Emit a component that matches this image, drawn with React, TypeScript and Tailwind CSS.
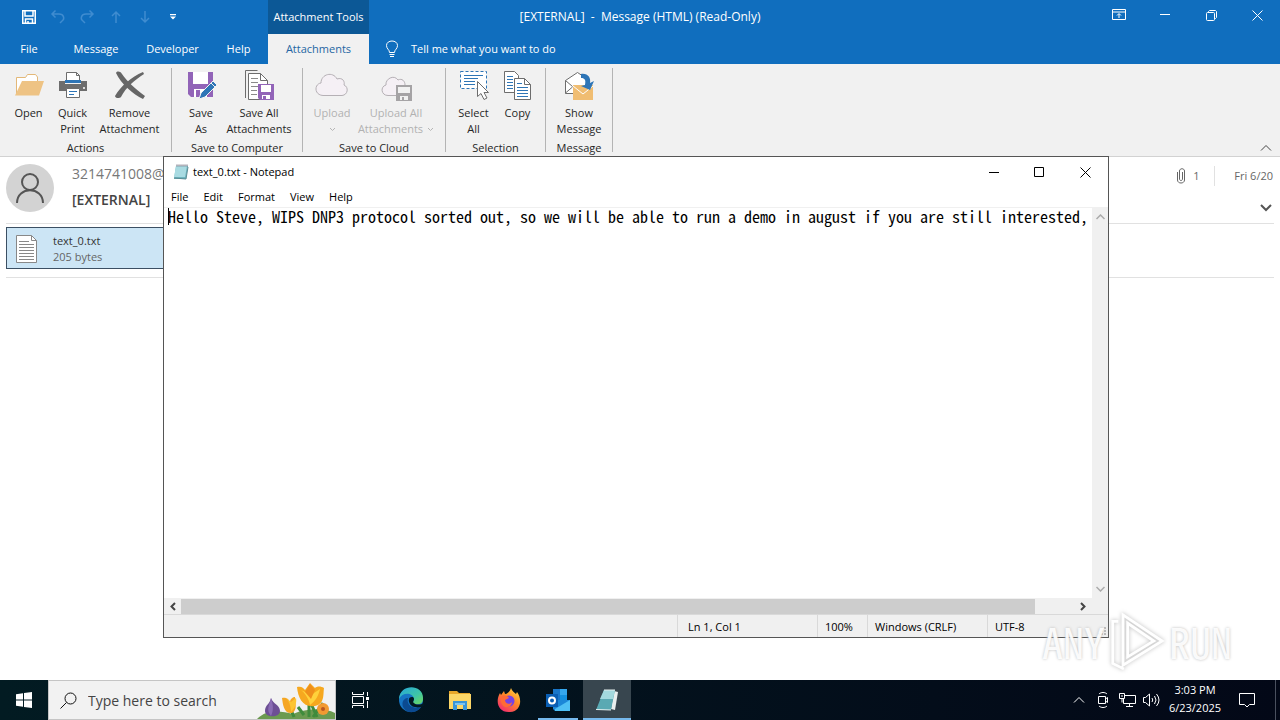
import type { ReactNode } from "react";
import clsx from "clsx";

const MESSAGE =
  "Hello Steve, WIPS DNP3 protocol sorted out, so we will be able to run a demo in august if you are still interested,";

/* ---------- ribbon icons ---------- */

function FolderIcon() {
  return (
    <svg width="32" height="32" viewBox="0 0 32 32" fill="none">
      <path d="M3.500 25V8.500h9l2-3h8l2 2.500v5" fill="#fff" stroke="#e3b878" />
      <path d="M2 26.500 9 12h22l-5 14.500z" fill="#eec384" />
    </svg>
  );
}

function PrinterIcon() {
  return (
    <svg width="32" height="32" viewBox="0 0 32 32" fill="none">
      <path d="M9.500 12V3.500h10l3 3V12" fill="#fff" stroke="#6d6d6d" />
      <path d="M19.500 3.500v3h3" stroke="#6d6d6d" />
      <path d="M2 12h6v3h16v-3h6v10H2z" fill="#6d6d6d" />
      <path d="M8 11h16v3H8z" fill="#2e75b6" />
      <circle cx="27" cy="19" r="1" fill="#fff" />
      <path d="M9.500 19.500h13v9h-13z" fill="#fff" stroke="#6d6d6d" />
      <path d="M12 22.500h8M12 25.500h5" stroke="#2e75b6" />
    </svg>
  );
}

function RemoveIcon() {
  return (
    <svg width="32" height="32" viewBox="0 0 32 32" fill="#666">
      <path d="M2 4c1-2 4-2 6 1 5 7 13 15 23 22l-2 3C19 25 7 15 2 4z" />
      <path d="M30 5C21 11 12 18 7 28c-2 2-6 1-6-1C7 17 17 8 29 3z" />
    </svg>
  );
}

function SaveAsIcon() {
  return (
    <svg width="32" height="32" viewBox="0 0 32 32">
      <path d="M3 3h25v25H6l-3-3z" fill="#9264b8" />
      <path d="M8 3h15v12H8z" fill="#fff" />
      <path d="M9 20h13v8H9z" fill="#fff" />
      <path d="M11 21h4v7h-4z" fill="#9264b8" />
      <path d="m14 30 2-6 12-12 4 4-12 12z" fill="#2e75b6" stroke="#f1f1f1" />
      <path d="m26 14 4 4" stroke="#f1f1f1" />
    </svg>
  );
}

function SaveAllIcon() {
  return (
    <svg width="32" height="32" viewBox="0 0 32 32" fill="none">
      <path d="M2.500 29V1.500h12" stroke="#6d6d6d" />
      <path d="M5.500 4.500h12l7 7v19h-19z" fill="#fff" stroke="#6d6d6d" />
      <path d="M17.500 4.500v7h7" stroke="#6d6d6d" />
      <path d="M8 9.500h7M8 13.500h7M8 17.500h7M8 21.500h6M8 25.500h6" stroke="#8a8a8a" />
      <path d="M15 15h16v16H17l-2-2z" fill="#9264b8" />
      <path d="M18 16h10v7H18zM19 26h8v4h-8z" fill="#fff" />
      <path d="M20 27h3v4h-3z" fill="#9264b8" />
    </svg>
  );
}

function CloudIcon() {
  return (
    <svg width="34" height="32" viewBox="0 0 34 32" fill="none">
      <path
        d="M8 26.500C-1 26-1 15 6 14c0-9 12-12 16-4 6-2 8 3 7 6 5 2 4 10-2 10.500z"
        fill="#f5f0f5"
        stroke="#b5b0b5"
      />
    </svg>
  );
}

function CloudSaveIcon() {
  return (
    <svg width="34" height="32" viewBox="0 0 34 32" fill="none">
      <path
        d="M17 26.500H9c-7 0-8-9-2-10.500C6 10 15 5 19 11c4-2 7 1 7 5"
        fill="#f5f0f5"
        stroke="#b5b0b5"
      />
      <path d="M17 16h16v16H17z" fill="#a5a3a5" />
      <path d="M19 18h12v6H19zM21 27h8v4h-8z" fill="#f1f1f1" />
      <path d="M23 28h2v4h-2z" fill="#a5a3a5" />
    </svg>
  );
}

function SelectAllIcon() {
  return (
    <svg width="32" height="32" viewBox="0 0 32 32" fill="none">
      <path d="M2.500 2.500h26v17h-26z" fill="#fff" stroke="#2e75b6" strokeDasharray="3 2" />
      <path d="M6 6.500h19M6 9.500h14M6 12.500h11M6 15.500h11" stroke="#2e75b6" />
      <path
        d="M19.500 12.500v15l3.500-3 3 6 3-1.500-3-5.500h4.500z"
        fill="#fff"
        stroke="#6d6d6d"
      />
    </svg>
  );
}

function CopyIcon() {
  return (
    <svg width="32" height="32" viewBox="0 0 32 32" fill="none">
      <path d="M2.500 2.500h10l4 4v17h-14z" fill="#fff" stroke="#6d6d6d" />
      <path d="M5 7.500h6M5 10.500h6M5 13.500h6M5 16.500h6M5 19.500h6" stroke="#2e75b6" />
      <path d="M12.500 9.500h10l6 6v15h-16z" fill="#fff" stroke="#6d6d6d" />
      <path d="M22.500 9.500v6h6" stroke="#6d6d6d" />
      <path d="M15 14.500h5M15 18.500h11M15 21.500h11M15 24.500h11M15 27.500h11" stroke="#2e75b6" />
    </svg>
  );
}

function ShowMessageIcon() {
  return (
    <svg width="32" height="32" viewBox="0 0 32 32" fill="none">
      <path d="M2.500 24.500v-13l12-8 12 8v13z" fill="#fff" stroke="#6d6d6d" />
      <path d="m2.500 24 7-6M2.500 11.500l7 6" stroke="#6d6d6d" />
      <path d="M10 16h20v15H10z" fill="#f0bd72" />
      <path d="m10 17 10 8 10-8" stroke="#fff" />
      <path d="M18 5c7-1 10 4 9 9l4-2-4 9-9-4 4-1c1-5 0-7-4-7z" fill="#2e75b6" />
    </svg>
  );
}

/* ---------- outlook ---------- */

type RibbonItem = {
  icon: ReactNode;
  lines: string[];
  width: string;
  disabled?: boolean;
  menu?: boolean;
};

const groups: { name: string; width: string; items: RibbonItem[] }[] = [
  {
    name: "Actions",
    width: "w-[172px]",
    items: [
      { icon: <FolderIcon />, lines: ["Open"], width: "w-11" },
      { icon: <PrinterIcon />, lines: ["Quick", "Print"], width: "w-11" },
      { icon: <RemoveIcon />, lines: ["Remove", "Attachment"], width: "w-[70px]" },
    ],
  },
  {
    name: "Save to Computer",
    width: "w-[131px]",
    items: [
      { icon: <SaveAsIcon />, lines: ["Save", "As"], width: "w-11" },
      { icon: <SaveAllIcon />, lines: ["Save All", "Attachments"], width: "w-[72px]" },
    ],
  },
  {
    name: "Save to Cloud",
    width: "w-[143px]",
    items: [
      { icon: <CloudIcon />, lines: ["Upload", ""], width: "w-11", disabled: true, menu: true },
      {
        icon: <CloudSaveIcon />,
        lines: ["Upload All", "Attachments"],
        width: "w-[84px]",
        disabled: true,
        menu: true,
      },
    ],
  },
  {
    name: "Selection",
    width: "w-[100px]",
    items: [
      { icon: <SelectAllIcon />, lines: ["Select", "All"], width: "w-11" },
      { icon: <CopyIcon />, lines: ["Copy"], width: "w-11" },
    ],
  },
  {
    name: "Message",
    width: "w-[67px]",
    items: [{ icon: <ShowMessageIcon />, lines: ["Show", "Message"], width: "w-[60px]" }],
  },
];

function MenuCaret() {
  return (
    <svg width="7" height="5" viewBox="0 0 7 5" fill="none" stroke="#b5b5b5">
      <path d="m1 1 2.500 2.500L6 1" />
    </svg>
  );
}

function RibbonButton({ item }: { item: RibbonItem }) {
  return (
    <button
      disabled={item.disabled}
      className={clsx(
        "flex flex-col items-center leading-4",
        item.width,
        item.disabled ? "text-[#b1b1b1]" : "text-[#262626]",
      )}
    >
      <span className="flex h-9 items-start">{item.icon}</span>
      {item.lines.map((line, i) => (
        <span key={i} className="flex h-4 items-center gap-1 whitespace-nowrap">
          {line}
          {item.menu && i === item.lines.length - 1 && <MenuCaret />}
        </span>
      ))}
    </button>
  );
}

function TitleBar() {
  return (
    <div className="grid h-[34px] grid-cols-[1fr_auto_1fr] text-white">
      <div className="flex">
        <div className="flex w-[268px] items-center gap-[13px] pl-[21px]">
          <button aria-label="Save">
            <svg width="16" height="16" viewBox="0 0 16 16" fill="none" stroke="#fff" strokeWidth="1.500">
              <path d="M1.750 1.750h12.500v12.500h-12.500zM4 2v5h8V2M4.500 14v-4h7v4M7 12v2" />
            </svg>
          </button>
          <button aria-label="Undo" className="text-[#3f8cd0]">
            <svg width="16" height="16" viewBox="0 0 16 16" fill="none" stroke="currentColor" strokeWidth="1.500">
              <path d="M5.500 1.500 2 5l3.500 3.500M2 5h7c5 0 6 5 3 7l-2 2" />
            </svg>
          </button>
          <button aria-label="Redo" className="text-[#3f8cd0]">
            <svg width="16" height="16" viewBox="0 0 16 16" fill="none" stroke="currentColor" strokeWidth="1.500">
              <path d="M10.500 1.500 14 5l-3.500 3.500M14 5H7C2 5 1 10 4 12l2 2" />
            </svg>
          </button>
          <button aria-label="Previous item" className="text-[#3f8cd0]">
            <svg width="16" height="16" viewBox="0 0 16 16" fill="none" stroke="currentColor" strokeWidth="1.500">
              <path d="M8 14V3M4 7l4-4 4 4" />
            </svg>
          </button>
          <button aria-label="Next item" className="text-[#3f8cd0]">
            <svg width="16" height="16" viewBox="0 0 16 16" fill="none" stroke="currentColor" strokeWidth="1.500">
              <path d="M8 2v11M4 9l4 4 4-4" />
            </svg>
          </button>
          <button aria-label="Customize toolbar">
            <svg width="14" height="16" viewBox="0 0 14 16" fill="#fff">
              <path d="M4 5h6v1.200H4zM4 7.500h6L7 10.500z" />
            </svg>
          </button>
        </div>
        <div className="flex w-[101px] items-center justify-center bg-[#0c5896] whitespace-nowrap">
          Attachment Tools
        </div>
      </div>
      <h1 className="self-center text-xs whitespace-pre">{"[EXTERNAL]  -  Message (HTML) (Read-Only)"}</h1>
      <div className="flex items-center justify-end pb-1">
        <button aria-label="Ribbon display options" className="flex w-[46px] justify-center">
          <svg width="14" height="12" viewBox="0 0 14 12" fill="none" stroke="#fff">
            <path d="M.5.500h13v10H.500zM.500 3h13M7 9V5M5 6.500 7 4.500l2 2" />
          </svg>
        </button>
        <button aria-label="Minimize" className="flex w-[46px] justify-center">
          <svg width="10" height="10" viewBox="0 0 10 10" stroke="#fff">
            <path d="M0 4.500h10" />
          </svg>
        </button>
        <button aria-label="Restore" className="flex w-[46px] justify-center">
          <svg width="11" height="11" viewBox="0 0 11 11" fill="none" stroke="#fff">
            <rect x=".5" y="2.500" width="8" height="8" rx="1" />
            <path d="M2.500 2.500V1.500l1-1h6l1 1v6l-1 1h-1" />
          </svg>
        </button>
        <button aria-label="Close" className="flex w-[46px] justify-center">
          <svg width="11" height="11" viewBox="0 0 11 11" stroke="#fff">
            <path d="m.5.500 10 10M10.500.500l-10 10" />
          </svg>
        </button>
      </div>
    </div>
  );
}

function Ribbon() {
  return (
    <>
      <nav className="flex h-[30px] leading-[30px] text-white">
        <div className="flex w-[268px]">
          <button className="w-[58px]">File</button>
          <button className="w-[76px]">Message</button>
          <button className="w-[77px]">Developer</button>
          <button className="w-[55px]">Help</button>
        </div>
        <button className="w-[101px] bg-[#f1f1f1] text-[#2566a3]">Attachments</button>
        <button className="ml-4 flex items-center gap-3">
          <svg width="14" height="18" viewBox="0 0 14 18" fill="none" stroke="#fff">
            <path d="M4.500 12.500c0-3-3-3.500-3-7 0-6 11-6 11 0 0 3.500-3 4-3 7zM4.500 14.500h5M5 16.500h4" />
          </svg>
          Tell me what you want to do
        </button>
      </nav>
      <div className="flex h-[93px] border-b border-[#d2d2d2] bg-[#f1f1f1] py-1">
        {groups.map((group) => (
          <section
            key={group.name}
            className={clsx("flex flex-col items-center border-r border-[#b4b4b4] pt-px", group.width)}
          >
            <div className="flex h-[71px] shrink-0 justify-center">
              {group.items.map((item) => (
                <RibbonButton key={item.lines[0]} item={item} />
              ))}
            </div>
            <h2 className="leading-4 text-[#262626]">{group.name}</h2>
          </section>
        ))}
        <button aria-label="Collapse the ribbon" className="mr-2 ml-auto self-end">
          <svg width="12" height="8" viewBox="0 0 12 8" fill="none" stroke="#444">
            <path d="m1 6.500 5-5 5 5" />
          </svg>
        </button>
      </div>
    </>
  );
}

function ReadingPane() {
  return (
    <main className="flex-1 px-1.5 pt-[7px] text-[#666]">
      <header className="flex h-[60px] border-b border-[#e1e1e1]">
        <svg width="48" height="48" viewBox="0 0 48 48" fill="none" stroke="#555" strokeWidth="2">
          <circle cx="24" cy="24" r="24" fill="#d3d3d3" stroke="none" />
          <circle cx="24" cy="18" r="8" />
          <path d="M11 39c0-17 26-17 26 0" />
        </svg>
        <div className="ml-[18px] text-sm leading-5">
          <p className="text-[#777]">3214741008@</p>
          <p className="pt-1.5 font-semibold text-[#444]">[EXTERNAL]</p>
        </div>
        <div className="ml-auto flex flex-col items-end">
          <div className="flex h-6 items-center">
            <svg width="10" height="16" viewBox="0 0 10 16" fill="none" stroke="#666">
              <path d="M6.500 4v7c0 2-3 2-3 0V3c0-3 5-3 5 0v9c0 4-7 4-7 0V4" />
            </svg>
            <span className="w-7 pl-[7px]">1</span>
            <span className="h-5 w-5 border-l border-[#e1e1e1]" />
            <span className="pr-px">Fri 6/20</span>
          </div>
          <button aria-label="Expand header" className="mt-4 mr-0.5">
            <svg width="12" height="8" viewBox="0 0 12 8" fill="none" stroke="#555" strokeWidth="2">
              <path d="m1 1 5 5 5-5" />
            </svg>
          </button>
        </div>
      </header>
      <div className="border-b border-[#e1e1e1] pt-[3px] pb-2">
        <button className="flex h-[42px] w-[200px] items-center gap-[15px] border border-[#3b4f63] bg-[#cce5f5] pt-px pl-[9px] text-left leading-4">
          <svg width="22" height="28" viewBox="0 0 22 28" fill="none" stroke="#888">
            <path d="M.5.500h15l5 5v22H.500z" fill="#fff" />
            <path d="M15.500.500v5h5M3 6.500h10M3 9.500h15M3 12.500h15M3 15.500h15M3 18.500h15M3 21.500h15M3 24.500h15" />
          </svg>
          <span>
            <span className="block text-[#333]">text_0.txt</span>
            <span className="block">205 bytes</span>
          </span>
        </button>
      </div>
    </main>
  );
}

/* ---------- notepad ---------- */

function NotepadGlyph() {
  return (
    <svg width="16" height="16" viewBox="0 0 16 16">
      <path d="M3 2h12l-2 13H1z" fill="#6fb5c0" />
      <path d="M3 2h11l-2 11H1z" fill="#a9dbe2" />
      <path d="m1 14 12 1 2-12" fill="none" stroke="#5b8b93" />
      <path d="M4 .500v2M6 .500v2M8 .500v2M10 .500v2M12 .500v2M14 .500v2" stroke="#667" />
    </svg>
  );
}

function Notepad() {
  return (
    <section className="absolute top-[156px] left-[163px] flex h-[482px] w-[946px] flex-col border border-[#555] bg-white text-black">
      <div className="flex h-[30px] shrink-0 items-center pl-[9px]">
        <NotepadGlyph />
        <h2 className="ml-1">text_0.txt - Notepad</h2>
        <div className="ml-auto flex">
          <button aria-label="Minimize Notepad" className="flex h-7 w-[45px] items-center justify-center">
            <svg width="10" height="11" viewBox="0 0 10 11" stroke="#000">
              <path d="M0 5.500h10" />
            </svg>
          </button>
          <button aria-label="Maximize Notepad" className="flex h-7 w-[46px] items-center justify-center">
            <svg width="10" height="10" viewBox="0 0 10 10" fill="none" stroke="#000">
              <path d="M.5.500h9v9H.500z" />
            </svg>
          </button>
          <button aria-label="Close Notepad" className="flex h-7 w-[46px] items-center justify-center">
            <svg width="11" height="11" viewBox="0 0 11 11" stroke="#000">
              <path d="m.5.500 10 10M10.500.500l-10 10" />
            </svg>
          </button>
        </div>
      </div>
      <nav className="flex h-5 shrink-0 items-center gap-[15px] pl-[7px]">
        <button>File</button>
        <button>Edit</button>
        <button>Format</button>
        <button>View</button>
        <button>Help</button>
      </nav>
      <div className="flex min-h-0 flex-1 border-t border-[#f0f0f0]">
        <div className="relative flex-1">
          <textarea
            aria-label="Document text"
            wrap="off"
            defaultValue={MESSAGE}
            className="block size-full resize-none overflow-hidden pl-1 font-['Noto_Sans_Mono_CJK_SC','Liberation_Mono',monospace] text-base leading-4 outline-none"
          />
          <span className="absolute top-0 left-1 h-[17px] w-px bg-black" />
        </div>
        <div className="flex w-4 flex-col items-center justify-between bg-[#f0f0f0] py-1.5">
          <svg width="9" height="6" viewBox="0 0 9 6" fill="none" stroke="#aaa" strokeWidth="1.500">
            <path d="m.5 5 4-4 4 4" />
          </svg>
          <svg width="9" height="6" viewBox="0 0 9 6" fill="none" stroke="#aaa" strokeWidth="1.500">
            <path d="m.5 1 4 4 4-4" />
          </svg>
        </div>
      </div>
      <div className="flex h-4 items-center bg-[#f0f0f0] pr-[17px]">
        <button aria-label="Scroll left" className="flex w-[17px] justify-center">
          <svg width="6" height="9" viewBox="0 0 6 9" fill="none" stroke="#444" strokeWidth="2">
            <path d="m5 1-3.500 3.500L5 8" />
          </svg>
        </button>
        <div className="flex h-[15px] flex-1">
          <span className="grow-22 bg-[#cdcdcd]" />
          <span className="grow" />
        </div>
        <button aria-label="Scroll right" className="flex w-[17px] justify-center">
          <svg width="6" height="9" viewBox="0 0 6 9" fill="none" stroke="#444" strokeWidth="2">
            <path d="m1 1 3.500 3.500L1 8" />
          </svg>
        </button>
      </div>
      <footer className="flex h-[23px] justify-end border-t border-[#d9d9d9] bg-[#f0f0f0] leading-6">
        <span className="w-[140px] border-l border-[#d9d9d9] pl-[10px]">Ln 1, Col 1</span>
        <span className="w-[50px] border-l border-[#d9d9d9] pl-[7px]">100%</span>
        <span className="w-[120px] border-l border-[#d9d9d9] pl-[7px]">Windows (CRLF)</span>
        <span className="flex w-[121px] justify-between border-l border-[#d9d9d9] pl-[7px]">
          UTF-8
          <svg width="10" height="10" viewBox="0 0 10 10" fill="#bbb" className="self-end">
            <path d="M6 0h2v2H6zM3 3h2v2H3zM6 3h2v2H6zM0 6h2v2H0zM3 6h2v2H3zM6 6h2v2H6z" />
          </svg>
        </span>
      </footer>
    </section>
  );
}

function Watermark() {
  return (
    <div className="pointer-events-none absolute right-12 bottom-[46px] flex items-center gap-1 font-['Noto_Sans_Mono_CJK_SC','Liberation_Sans_Narrow',sans-serif] text-[42px] leading-none text-white/90 [text-shadow:0_0_3px_#bbb]">
      <span>ANY</span>
      <svg
        width="56"
        height="66"
        viewBox="0 0 60 66"
        fill="none"
        stroke="#fff"
        strokeWidth="3"
        className="drop-shadow-[0_0_2px_#bbb]"
      >
        <path d="M15 5v54l42-26zM20 14v36l28-17zM10 12H4v45l12 6" />
      </svg>
      <span>RUN</span>
    </div>
  );
}

/* ---------- taskbar ---------- */

function Flowers() {
  return (
    <svg width="78" height="38" viewBox="0 0 78 38">
      <path d="M0 38c10-10 24-8 36-5 14-6 32-6 42-1v6z" fill="#6b9a50" />
      <path d="M37 36 32 24M52 36V20M56 36l10-14M47 34l-6-8M60 36l-8-18" stroke="#3f8b3c" strokeWidth="3" />
      <path d="M14 17c2 6 9 7 9 13 0 7-15 7-15 0 0-6 5-7 6-13z" fill="#6d4f95" />
      <path d="M14 17c-2 8-5 12 0 18 3-6 2-12 0-18z" fill="#8a6cb4" />
      <path d="M25 17c5-1 7 2 8 4 0-3 3-5 5-5 0 6 3 13-3 16-8 1-9-8-10-15z" fill="#f5a623" />
      <path d="M29 17c3 3 5 8 5 14 4-4 6-9 5-14l-5 4z" fill="#fcc532" />
      <path d="M40 6c5-1 6 1 8 3l5-7 5 5c2-2 6-2 9 0-1 6 1 16-9 18-12 2-17-8-18-19z" fill="#f6a81f" />
      <path d="M44 9c4 3 8 9 9 15 6-4 9-11 10-16l-9 6z" fill="#ffd13b" />
      <path d="m53 3-5 8 6 7 4-9z" fill="#ef8f1b" />
      <circle cx="66" cy="28" r="6" fill="#f29a32" />
      <circle cx="66" cy="28" r="2" fill="#b95722" />
    </svg>
  );
}

function EdgeIcon() {
  return (
    <svg width="26" height="26" viewBox="0 0 26 26">
      <defs>
        <linearGradient id="edge-top" x1="0" y1="0" x2="1" y2="1">
          <stop stopColor="#25a6dc" />
          <stop offset=".6" stopColor="#3fc6a5" />
          <stop offset="1" stopColor="#72d957" />
        </linearGradient>
      </defs>
      <circle cx="13" cy="13" r="12" fill="#1675c4" />
      <path d="M1 12C2-4 26-3 25 12c0 5-5 6-9 5-3-1 0-2 0-5C15 5 4 5 1 12z" fill="url(#edge-top)" />
      <path d="M10 11c-2 6 4 12 13 9l1-1C20 26 9 28 5 20c-2-6 2-9 5-9z" fill="#0b4a91" />
      <path d="M11 12c0-2 5-3 5 0 0 2-2 3 0 4 2 2 6 2 10 0v3c-2 1-6 2-9 1-4 0-7-5-6-8z" fill="#021922" />
    </svg>
  );
}

function ExplorerIcon() {
  return (
    <svg width="24" height="22" viewBox="0 0 24 22">
      <path d="M1 2h8l2 2h11v4H1z" fill="#e8a72a" />
      <path d="M1 5h22v15H1z" fill="#fcd667" />
      <path d="M5 12h14v9h-4v-5H9v5H5z" fill="#3a95d8" />
      <path d="M7 14h10v2H7z" fill="#7cc4f2" />
    </svg>
  );
}

function FirefoxIcon() {
  return (
    <svg width="26" height="26" viewBox="0 0 26 26">
      <defs>
        <linearGradient id="fox" x1="1" y1="0" x2=".3" y2="1">
          <stop stopColor="#ffe14a" />
          <stop offset=".5" stopColor="#ff8a26" />
          <stop offset="1" stopColor="#f4306b" />
        </linearGradient>
      </defs>
      <path
        d="M15 1c1 3 3 4 5 6l1-2c5 6 5 19-7 20C2 26-1 14 4 6l1 2 3-4 1 3c3 0 5-3 6-6z"
        fill="url(#fox)"
      />
      <circle cx="13" cy="14" r="5.500" fill="#7542e5" />
      <path d="M5 10c3-3 7-1 8 1l-4 2c0 4 5 5 7 2 0 4-4 6-7 5-3-1-5-5-4-10z" fill="#ff6a36" />
    </svg>
  );
}

function OutlookIcon() {
  return (
    <svg width="26" height="24" viewBox="0 0 26 24">
      <path d="M8 1h14v13H8z" fill="#1976c9" />
      <path d="M15 1h7v6h-7z" fill="#35a7ee" />
      <path d="M15 7h7v6h-7z" fill="#1490df" />
      <path d="M8 12h17v11H10l-2-2z" fill="#1b87d8" />
      <path d="m25 12-15 9v2h15z" fill="#4fc0f5" />
      <path d="M1 6h12v13H1z" fill="#0a5eb3" />
      <circle cx="7" cy="12.500" r="3" fill="none" stroke="#fff" strokeWidth="2" />
    </svg>
  );
}

function TaskNotepadIcon() {
  return (
    <svg width="26" height="24" viewBox="0 0 26 24">
      <path d="m20 3 4 1-3 18-4-1z" fill="#e9efef" />
      <path d="M10 2h11l-4 20H2z" fill="#5aa9b3" />
      <path d="M10 2h11l-2 9H6z" fill="#a3d9de" />
      <path d="M10 2h11M2 21.500l15 .500" stroke="#e5eeee" />
    </svg>
  );
}

function Taskbar() {
  return (
    <footer className="flex h-10 bg-linear-to-r from-[#021b22] to-[#030817] text-white">
      <button aria-label="Start" className="flex w-12 items-center justify-center">
        <svg width="16" height="16" viewBox="0 0 16 16" fill="#fff">
          <path d="M0 2.200 7 1.200v6.300H0zM8 1.100 16 0v7.500H8zM0 8.500h7v6.300l-7-1zM8 8.500h8V16l-8-1.100z" />
        </svg>
      </button>
      <label className="flex w-72 items-center border border-[#c5c5c5] bg-[#f2f2f2] pl-[11px]">
        <svg width="17" height="17" viewBox="0 0 17 17" fill="none" stroke="#111">
          <circle cx="10.500" cy="6.500" r="5.500" />
          <path d="m6.500 10.500-6 6" />
        </svg>
        <input
          aria-label="Search"
          placeholder="Type here to search"
          className="ml-[11px] w-0 flex-1 pt-0.5 text-sm outline-none placeholder:text-[#444]"
        />
        <Flowers />
      </label>
      <button aria-label="Task view" className="mr-[3px] flex w-12 items-center justify-center">
        <svg width="17" height="16" viewBox="0 0 17 16" fill="none" stroke="#fff">
          <path d="M.5 0v2.500h11V0M.5 16v-2.500h11V16M.5 4.500h11v7H.500zM15.500 0v4M15.500 9v7" />
          <path d="M14 5h3v3h-3z" fill="#fff" stroke="none" />
        </svg>
      </button>
      <div className="flex gap-px">
        <button aria-label="Edge" className="flex w-12 items-center justify-center">
          <EdgeIcon />
        </button>
        <button aria-label="File Explorer" className="flex w-12 items-center justify-center">
          <ExplorerIcon />
        </button>
        <button aria-label="Firefox" className="flex w-12 items-center justify-center">
          <FirefoxIcon />
        </button>
        <button aria-label="Outlook" className="flex w-12 flex-col items-center justify-between pt-2">
          <OutlookIcon />
          <span className="h-0.5 w-10 bg-[#76b9ed]" />
        </button>
        <button
          aria-label="Notepad"
          className="flex w-12 flex-col items-center justify-between bg-[#38464f] pt-2"
        >
          <TaskNotepadIcon />
          <span className="h-0.5 w-12 bg-[#76b9ed]" />
        </button>
      </div>
      <div className="ml-auto flex items-center">
        <button aria-label="Show hidden icons" className="flex w-6 justify-center">
          <svg width="12" height="8" viewBox="0 0 12 8" fill="none" stroke="#fff">
            <path d="m1 6.500 5-5 5 5" />
          </svg>
        </button>
        <button aria-label="Meet now" className="flex w-6 justify-center">
          <svg width="13" height="16" viewBox="0 0 13 16" fill="none" stroke="#fff">
            <path d="M1.500 4.500h7v7h-7zM8.500 7l2-1.500v5l-2-1.500M2 2c2-2 6-2 8 0M2 14c2 2 6 2 8 0" />
          </svg>
        </button>
        <button aria-label="Network" className="flex w-6 justify-center">
          <svg width="17" height="14" viewBox="0 0 17 14" fill="none" stroke="#fff">
            <path d="M6 2.500h10.500v8H4.500V6M.5.500h5v5h-5zM3 5.500v4M10.500 10.500v3M7 13.500h7M2 3h2" />
          </svg>
        </button>
        <button aria-label="Volume" className="flex w-6 justify-center">
          <svg width="17" height="14" viewBox="0 0 17 14" fill="none" stroke="#fff">
            <path d="M.5 4.500h2l4-3.500v12l-4-3.500h-2zM9 5q1.500 2 0 4M11.500 3q3 4 0 8M13.500 1q5 6 0 12" />
          </svg>
        </button>
        <div className="w-16 pb-0.5 text-center leading-[18px]">
          <p>3:03 PM</p>
          <p>6/23/2025</p>
        </div>
        <button aria-label="Notifications" className="mr-5 ml-3 flex">
          <svg width="16" height="16" viewBox="0 0 16 16" fill="none" stroke="#fff">
            <path d="M.5 1.500h15v11h-5L8 15l-2.500-2.500h-5z" />
          </svg>
        </button>
        <span className="mr-1 h-10 w-px bg-[#4a505e]" />
      </div>
    </footer>
  );
}

export default function App() {
  return (
    <div className="relative flex min-h-screen flex-col overflow-hidden bg-white font-['Open_Sans','Noto_Sans',sans-serif] text-[11px]">
      <div className="bg-[#106ebe]">
        <TitleBar />
        <Ribbon />
      </div>
      <ReadingPane />
      <Taskbar />
      <Notepad />
      <Watermark />
    </div>
  );
}
